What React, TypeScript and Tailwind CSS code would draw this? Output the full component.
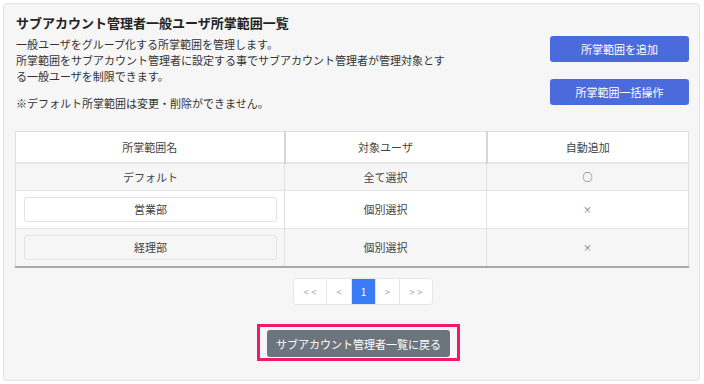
const rows = [
  { name: 'デフォルト', target: '全て選択', auto: '○', editable: false },
  { name: '営業部', target: '個別選択', auto: '×', editable: true },
  { name: '経理部', target: '個別選択', auto: '×', editable: true },
]

const pages = [
  { label: '< <', w: 'w-[32px]' },
  { label: '<', w: 'w-[25px]' },
  { label: '1', w: 'w-[24px]', active: true },
  { label: '>', w: 'w-[24px]' },
  { label: '> >', w: 'w-[33px]' },
]

export default function App() {
  return (
    <div className="w-[704px] h-[384px] bg-white p-[3px] font-['Noto_Sans_CJK_JP','Noto_Sans',sans-serif] text-[#333]">
      <div className="w-[697px] h-[378px] bg-[#f6f6f6] border border-[#e2e2e2] rounded-[4px] pl-[11px] pr-[11px] pt-[10px]">
        <div className="flex justify-between">
          <div>
            <h1 className="text-[13px] leading-[18px] font-bold text-[#222] pl-[1px] mb-[4px]">サブアカウント管理者一般ユーザ所掌範囲一覧</h1>
            <div className="w-[436px] text-[11px] leading-[16px] pl-[1px]">
              <p>一般ユーザをグループ化する所掌範囲を管理します。</p>
              <p>所掌範囲をサブアカウント管理者に設定する事でサブアカウント管理者が管理対象とする一般ユーザを制限できます。</p>
              <p className="mt-[11px]">※デフォルト所掌範囲は変更・削除ができません。</p>
            </div>
          </div>
          <div className="flex flex-col gap-[17px] pt-[22px] mr-[-1px]">
            <button className="w-[139px] h-[26px] rounded-[3px] bg-[#4b6bdc] text-white text-[11px]">所掌範囲を追加</button>
            <button className="w-[139px] h-[26px] rounded-[3px] bg-[#4b6bdc] text-white text-[11px]">所掌範囲一括操作</button>
          </div>
        </div>

        <table className="mt-[20px] w-[673px] border-collapse text-[11px] text-[#444] border border-[#dedede] border-b-2 border-b-[#aaaaaa] table-fixed">
          <colgroup>
            <col className="w-[269px]" />
            <col className="w-[202px]" />
            <col className="w-[202px]" />
          </colgroup>
          <thead>
            <tr className="bg-white h-[31px] border-b-2 border-[#e6e6e6]">
              <th className="font-normal border-r-2 border-[#d6d6d6]">所掌範囲名</th>
              <th className="font-normal border-r-2 border-[#d6d6d6]">対象ユーザ</th>
              <th className="font-normal">自動追加</th>
            </tr>
          </thead>
          <tbody>
            {rows.map((r, i) => (
              <tr key={r.name} className={`${i % 2 === 0 ? 'bg-[#f6f6f6]' : 'bg-white'} ${r.editable ? 'h-[38px]' : 'h-[28px]'} border-t border-[#e4e4e4]`}>
                <td className="border-r border-[#e0e0e0] text-center pl-[8px] pr-[7px]">
                  {r.editable ? (
                    <div className="h-[25px] border border-[#e3e3e3] rounded-[3px] flex items-center justify-center">{r.name}</div>
                  ) : (
                    r.name
                  )}
                </td>
                <td className="border-r border-[#e0e0e0] text-center">{r.target}</td>
                <td className={`text-center ${r.auto === '×' ? 'text-[9px] text-[#666]' : 'text-[10px]'}`}>{r.auto}</td>
              </tr>
            ))}
          </tbody>
        </table>

        <div className="flex justify-center pl-[23px] mt-[10px]">
          <div className="flex h-[27px] border border-[#e6e6e6] rounded-[3px] bg-white overflow-hidden">
            {pages.map((p, i) => (
              <div
                key={i}
                className={`${p.w} flex items-center justify-center text-[10px] whitespace-pre ${i > 0 ? 'border-l border-[#e6e6e6]' : ''} ${p.active ? 'bg-[#3a7cf5] text-white' : 'text-[#aaa]'}`}
              >
                {p.label}
              </div>
            ))}
          </div>
        </div>

        <div className="flex justify-center pl-[14px] mt-[19px]">
          <div className="border-[3px] border-[#f0196c] px-[7px] pt-[3px] pb-[1px]">
            <button className="h-[27px] px-[9px] rounded-[3px] bg-[#6c757d] text-white text-[11px]">サブアカウント管理者一覧に戻る</button>
          </div>
        </div>
      </div>
    </div>
  )
}
